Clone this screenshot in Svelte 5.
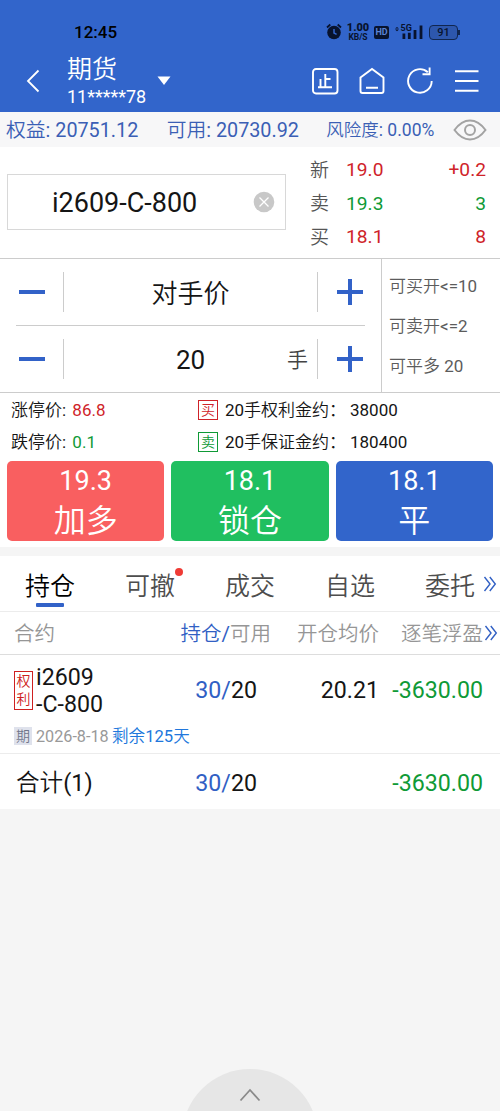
<script lang="ts">
  const quotes = [
    { label: "新", price: "19.0", amount: "+0.2", tone: "red", amountTone: "red" },
    { label: "卖", price: "19.3", amount: "3", tone: "green", amountTone: "green" },
    { label: "买", price: "18.1", amount: "8", tone: "red", amountTone: "red" },
  ];

  const limits = ["可买开<=10", "可卖开<=2", "可平多 20"];

  const costs = [
    { name: "涨停价:", value: "86.8", tone: "red", tag: "买", label: "20手权利金约：", total: "38000" },
    { name: "跌停价:", value: "0.1", tone: "green", tag: "卖", label: "20手保证金约：", total: "180400" },
  ];

  const actions = [
    { price: "19.3", name: "加多", kind: "buy" },
    { price: "18.1", name: "锁仓", kind: "lock" },
    { price: "18.1", name: "平", kind: "close" },
  ];

  const tabs = ["持仓", "可撤", "成交", "自选", "委托"];
  let active = $state("持仓");
</script>

{#snippet more()}
  <svg class="more" width="14" height="18" viewBox="0 0 14 18">
    <path d="M1.5 2 L7 9 L1.5 16 M6.8 2 L12.3 9 L6.8 16" />
  </svg>
{/snippet}

<div class="app">
  <header>
    <div class="status">
      <span class="time">12:45</span>
      <svg class="alarm" width="16" height="18" viewBox="0 0 16 18">
        <circle cx="8" cy="9.5" r="6.8" fill="#08132e" />
        <path d="M1 4.5 L4.3 1.5 M15 4.5 L11.7 1.5" stroke="#08132e" stroke-width="1.8" />
        <path d="M8 6 V10 L10.6 11.3" fill="none" stroke="#3265cb" stroke-width="1.5" />
      </svg>
      <span class="speed"><b>1.00</b><i>KB/S</i></span>
      <span class="hd">HD</span>
      <svg class="signal" width="28" height="18" viewBox="0 0 28 18">
        <path d="M0 5.6 L2 4 L4 5.6 Z M0 6.6 L2 8.2 L4 6.6 Z" fill="#08132e" />
        <text x="5.5" y="8" font-size="9" font-weight="700" fill="#08132e">5G</text>
        <path d="M8.9 10.5 V16 M14.3 9.8 V16 M20 7 V16 M26 2.5 V16" stroke="#08132e" stroke-width="2.8" />
      </svg>
      <span class="battery">91</span>
    </div>
    <div class="bar">
      <svg class="back" width="14" height="24" viewBox="0 0 14 24">
        <path d="M12.5 1.5 L2 12 L12.5 22.5" />
      </svg>
      <div class="title">
        <span class="name">期货</span>
        <span class="user">11*****78</span>
      </div>
      <svg class="caret" width="14" height="10" viewBox="0 0 14 10">
        <path d="M0.5 0.5 H13.5 L7 9 Z" />
      </svg>
      <div class="tools">
        <svg width="28" height="28" viewBox="0 0 28 28">
          <rect x="2" y="2" width="24.5" height="24.5" rx="3" />
          <path d="M14.3 7 V20 M14.3 12 H19.5 M9.5 12 V20 M7 20.2 H21" />
        </svg>
        <svg width="28" height="28" viewBox="0 0 28 28">
          <path d="M2.5 10.5 L14 2 L25.5 10.5 V24 Q25.5 26 23.5 26 H4.5 Q2.5 26 2.5 24 Z M8 20.7 H20" />
        </svg>
        <svg width="28" height="28" viewBox="0 0 28 28">
          <path d="M25.7 14 A11.8 11.8 0 1 1 21.8 5.2 M23.6 0.5 V7.3 H16.5" />
        </svg>
        <svg width="28" height="28" viewBox="0 0 28 28">
          <path d="M2 4.2 H25.5 M2 14 H25.5 M2 23.7 H25.5" />
        </svg>
      </div>
    </div>
  </header>

  <section class="account">
    <span class="equity">权益: 20751.12</span>
    <span class="available">可用: 20730.92</span>
    <span class="risk">风险度: 0.00%</span>
    <svg width="34" height="22" viewBox="0 0 34 22">
      <path d="M1.5 11 Q8.5 1.5 17 1.5 T32.5 11 Q25.5 20.5 17 20.5 T1.5 11 Z" />
      <circle cx="17" cy="11" r="5" />
    </svg>
  </section>

  <section class="quote">
    <div class="contract">
      <span>i2609-C-800</span>
      <svg width="22" height="22" viewBox="0 0 22 22">
        <circle cx="11" cy="11" r="10.3" fill="#c8c8c8" />
        <path d="M6.5 6.5 L15.5 15.5 M15.5 6.5 L6.5 15.5" stroke="#fff" stroke-width="1.3" />
      </svg>
    </div>
    <div class="prices">
      {#each quotes as q}
        <div class="price-row">
          <span class="label">{q.label}</span>
          <span class={q.tone}>{q.price}</span>
          <span class="amount {q.amountTone}">{q.amount}</span>
        </div>
      {/each}
    </div>
  </section>

  <section class="order">
    <div class="steppers">
      <div class="stepper">
        <button class="minus" aria-label="-"></button>
        <span class="value">对手价</span>
        <button class="plus" aria-label="+"></button>
      </div>
      <div class="stepper">
        <button class="minus" aria-label="-"></button>
        <span class="value">20</span>
        <span class="unit">手</span>
        <button class="plus" aria-label="+"></button>
      </div>
    </div>
    <div class="limits">
      {#each limits as limit}
        <span>{limit}</span>
      {/each}
    </div>
  </section>

  <section class="costs">
    {#each costs as c}
      <div class="cost">
        <span class="stop">{c.name} <span class={c.tone}>{c.value}</span></span>
        <span class="tag {c.tone}">{c.tag}</span>
        <span class="cost-label">{c.label}</span>
        <span>{c.total}</span>
      </div>
    {/each}
  </section>

  <section class="actions">
    {#each actions as a}
      <button class={a.kind}>
        <span class="at">{a.price}</span>
        <span class="act">{a.name}</span>
      </button>
    {/each}
  </section>

  <nav>
    {#each tabs as tab}
      <button class:active={tab === active} onclick={() => (active = tab)}>
        {tab}
        {#if tab === "可撤"}<span class="dot"></span>{/if}
      </button>
    {/each}
    {@render more()}
  </nav>

  <div class="row head">
    <span class="c1">合约</span>
    <span class="c2"><span class="blue">持仓/</span>可用</span>
    <span class="c3">开仓均价</span>
    <span class="c4">逐笔浮盈</span>
    {@render more()}
  </div>

  <div class="position">
    <div class="row body">
      <span class="c1 instrument">
        <span class="right-tag">权<br />利</span>
        <span>i2609<br />-C-800</span>
      </span>
      <span class="c2"><span class="blue">30/</span>20</span>
      <span class="c3">20.21</span>
      <span class="c4 green">-3630.00</span>
    </div>
    <div class="expiry">
      <span class="kind">期</span>
      <span class="date">2026-8-18</span>
      <span class="left">剩余125天</span>
    </div>
  </div>

  <div class="row body total">
    <span class="c1">合计(1)</span>
    <span class="c2"><span class="blue">30/</span>20</span>
    <span class="c3"></span>
    <span class="c4 green">-3630.00</span>
  </div>

  <footer>
    <div class="handle">
      <svg width="22" height="14" viewBox="0 0 22 14">
        <path d="M1.5 12.5 L11 2 L20.5 12.5" />
      </svg>
    </div>
  </footer>
</div>

<style>
  :global(body) {
    background: #f5f5f5;
  }

  .app {
    width: 500px;
    height: 1111px;
    display: flex;
    flex-direction: column;
    overflow: hidden;
    font-family: Roboto, "Noto Sans CJK SC DemiLight", "Noto Sans CJK SC", sans-serif;
    line-height: 1.2;
    color: #151515;
    background: #f5f5f5;
    white-space: nowrap;
  }

  .app * {
    box-sizing: border-box;
  }

  svg {
    display: block;
    flex: none;
    fill: none;
  }

  button {
    border: 0;
    padding: 0;
    background: none;
    font: inherit;
    color: inherit;
  }

  .red { color: #cf2329; }
  .green { color: #0f9a36; }
  .blue { color: #3160c4; }

  header {
    height: 112px;
    background: #3265cb;
  }

  .status {
    height: 50px;
    padding: 14px 40px 0 74px;
    display: flex;
    align-items: center;
    color: #08132e;
  }

  .time {
    width: 252px;
    font-size: 17px;
    font-weight: 500;
    color: #000;
  }

  .speed {
    width: 22px;
    margin-left: 5px;
    display: flex;
    flex-direction: column;
    align-items: center;
    font-weight: 700;
  }

  .speed b {
    font-size: 11px;
    line-height: 10px;
  }

  .speed i {
    font-size: 8.5px;
    font-style: normal;
    line-height: 8px;
  }

  .hd {
    width: 15px;
    height: 13px;
    margin-left: 5px;
    border-radius: 2px;
    background: #08132e;
    color: #5a83d6;
    font-size: 9px;
    font-weight: 700;
    line-height: 13px;
    text-align: center;
  }

  .signal { margin-left: 6px; }

  .battery {
    position: relative;
    width: 29px;
    height: 15px;
    margin-left: 6px;
    border: 1.5px solid #102650;
    border-radius: 4px;
    background: #2d57ad;
    font-size: 11px;
    font-weight: 500;
    line-height: 13px;
    text-align: center;
  }

  .battery::after {
    content: "";
    position: absolute;
    right: -3px;
    top: 4px;
    width: 2px;
    height: 5px;
    background: #102650;
  }

  .bar {
    height: 62px;
    padding: 0 19px 0 26px;
    display: flex;
    align-items: center;
    color: #fff;
  }

  .back path {
    stroke: #fff;
    stroke-width: 1.8;
  }

  .title {
    width: 90px;
    margin-left: 27px;
    display: flex;
    flex-direction: column;
  }

  .name {
    font-size: 25px;
    line-height: 31px;
  }

  .user {
    font-size: 18px;
    line-height: 23px;
  }

  .caret path { fill: #fff; }

  .tools {
    margin-left: auto;
    display: flex;
    gap: 19.3px;
  }

  .tools path,
  .tools rect {
    stroke: #fff;
    stroke-width: 1.9;
  }

  .account {
    height: 35px;
    padding: 2px 13px 0 6px;
    display: flex;
    align-items: center;
    background: #f7f7f8;
    color: #3b5fb5;
    font-size: 19.8px;
  }

  .equity { width: 161px; }
  .available { width: 160px; }

  .risk {
    width: 127px;
    font-size: 17.5px;
  }

  .account svg { margin-top: -2px; }

  .account path,
  .account circle {
    stroke: #a3a3a3;
    stroke-width: 2;
  }

  .quote {
    height: 112px;
    padding-left: 7px;
    display: flex;
    border-bottom: 1px solid #ccc;
    background: #fff;
  }

  .contract {
    width: 279px;
    height: 56px;
    margin-top: 27px;
    padding: 3px 10px 0 44px;
    display: flex;
    align-items: center;
    justify-content: space-between;
    border: 1px solid #d8d8d8;
    font-size: 27px;
  }

  .contract svg { margin-top: -3px; }

  .prices {
    flex: 1;
    padding: 6px 14px 0 24px;
    font-size: 19.2px;
  }

  .price-row {
    height: 33.5px;
    display: flex;
    align-items: center;
  }

  .label {
    width: 36px;
    padding-top: 3px;
    font-size: 19px;
    color: #555;
  }

  .amount { margin-left: auto; }

  .order {
    height: 134px;
    display: flex;
    border-bottom: 1px solid #ccc;
    background: #fff;
  }

  .steppers {
    width: 381px;
    padding: 0 16px;
  }

  .stepper {
    position: relative;
    height: 67px;
    display: flex;
    align-items: center;
    font-size: 26px;
  }

  .stepper:first-child { border-bottom: 1px solid #ccc; }
  .stepper:last-child { height: 66px; }

  .value {
    flex: 1;
    padding-top: 3px;
    text-align: center;
  }

  .stepper:first-child .value { padding-top: 6px; }

  .unit {
    position: absolute;
    right: 57px;
    padding-top: 3px;
    font-size: 21px;
    color: #444;
  }

  .minus,
  .plus {
    width: 48px;
    height: 40px;
    display: grid;
    place-items: center;
  }

  .minus { border-right: 1px solid #ccc; padding-right: 16px; }
  .plus { border-left: 1px solid #ccc; padding-left: 16px; }

  .minus::before,
  .plus::before,
  .plus::after {
    content: "";
    grid-area: 1 / 1;
    width: 26px;
    height: 4px;
    background: #3262c8;
  }

  .plus::after {
    width: 4px;
    height: 26px;
  }

  .limits {
    flex: 1;
    padding: 7px 0 0 7px;
    display: flex;
    flex-direction: column;
    border-left: 1px solid #ccc;
    font-size: 17px;
    line-height: 40px;
    color: #5c5c5c;
  }

  .costs {
    height: 68px;
    padding-top: 1px;
    background: #fff;
    font-size: 17px;
  }

  .cost {
    height: 32px;
    padding-left: 11px;
    display: flex;
    align-items: center;
  }

  .stop {
    width: 187px;
    word-spacing: 2px;
  }

  .tag {
    width: 20px;
    height: 20px;
    margin-top: -1px;
    border: 1px solid currentColor;
    font-size: 14px;
    line-height: 18px;
    text-align: center;
  }

  .cost-label {
    width: 125px;
    margin-left: 7px;
  }

  .actions {
    height: 86px;
    padding: 0 7px 6px;
    display: flex;
    gap: 7px;
    background: #fff;
  }

  .actions button {
    flex: 1;
    border-radius: 5px;
    display: flex;
    flex-direction: column;
    align-items: center;
    color: #fff;
  }

  .buy { background: #f95f60; }
  .lock { background: #20bf60; }
  .close { background: #3265cb; }

  .at {
    font-size: 27px;
    line-height: 41px;
  }

  .act {
    font-size: 32px;
    line-height: 39px;
  }

  nav {
    height: 56px;
    margin-top: 9px;
    display: flex;
    align-items: center;
    position: relative;
    border-bottom: 1px solid #ececec;
    background: #fff;
  }

  nav button {
    position: relative;
    flex: none;
    width: 100px;
    height: 55px;
    padding-top: 6px;
    font-size: 25px;
    color: #4d4d4d;
  }

  nav .active { color: #000; }

  nav .active::after {
    content: "";
    position: absolute;
    left: 36px;
    bottom: 4px;
    width: 28px;
    height: 4px;
    border-radius: 1px;
    background: #3262c8;
  }

  .dot {
    position: absolute;
    left: 75px;
    top: 12px;
    width: 8px;
    height: 8px;
    border-radius: 50%;
    background: #ef3b35;
  }

  .more path {
    stroke: #3160c4;
    stroke-width: 1.4;
  }

  nav .more,
  .head .more {
    position: absolute;
    right: 3px;
  }

  .row {
    position: relative;
    padding: 0 17px 0 14px;
    display: grid;
    grid-template-columns: 141px 102px 122px 1fr;
    align-items: center;
    background: #fff;
  }

  .c2,
  .c3,
  .c4 {
    text-align: right;
  }

  .head {
    height: 43px;
    padding-top: 2px;
    border-bottom: 1px solid #ddd;
    font-size: 20.5px;
    color: #969696;
  }

  .head .c2 { margin-right: -14px; }
  .head .more { right: 2px; }

  .body { font-size: 23.2px; }

  .position {
    height: 99px;
    border-bottom: 1px solid #ececec;
    background: #fff;
  }

  .position .row { height: 72px; }

  .instrument {
    display: flex;
    align-items: center;
    gap: 3px;
    line-height: 27px;
  }

  .right-tag {
    width: 19px;
    height: 39px;
    margin-top: -2px;
    border: 1px solid #cf2020;
    color: #cf2020;
    font-size: 14px;
    line-height: 18px;
    text-align: center;
  }

  .expiry {
    height: 20px;
    padding-left: 14px;
    display: flex;
    align-items: center;
    font-size: 16.6px;
  }

  .kind {
    width: 18px;
    height: 18px;
    margin-top: -2px;
    background: #dfe2ec;
    font-size: 14px;
    line-height: 18px;
    text-align: center;
    color: #70768a;
  }

  .date {
    width: 76px;
    margin-left: 4px;
    font-size: 16.2px;
    color: #999;
  }

  .left { color: #2077dc; }

  .total {
    height: 55px;
    padding-top: 4px;
  }

  .total .c1 {
    padding-left: 2px;
    font-size: 23.6px;
  }

  footer {
    flex: 1;
    display: flex;
    justify-content: center;
    align-items: flex-end;
  }

  .handle {
    width: 136px;
    height: 136px;
    margin-bottom: -94px;
    padding-top: 19px;
    border-radius: 50%;
    background: #e6e6e6;
    display: flex;
    justify-content: center;
  }

  .handle path {
    stroke: #8a8a8a;
    stroke-width: 1.8;
  }
</style>
